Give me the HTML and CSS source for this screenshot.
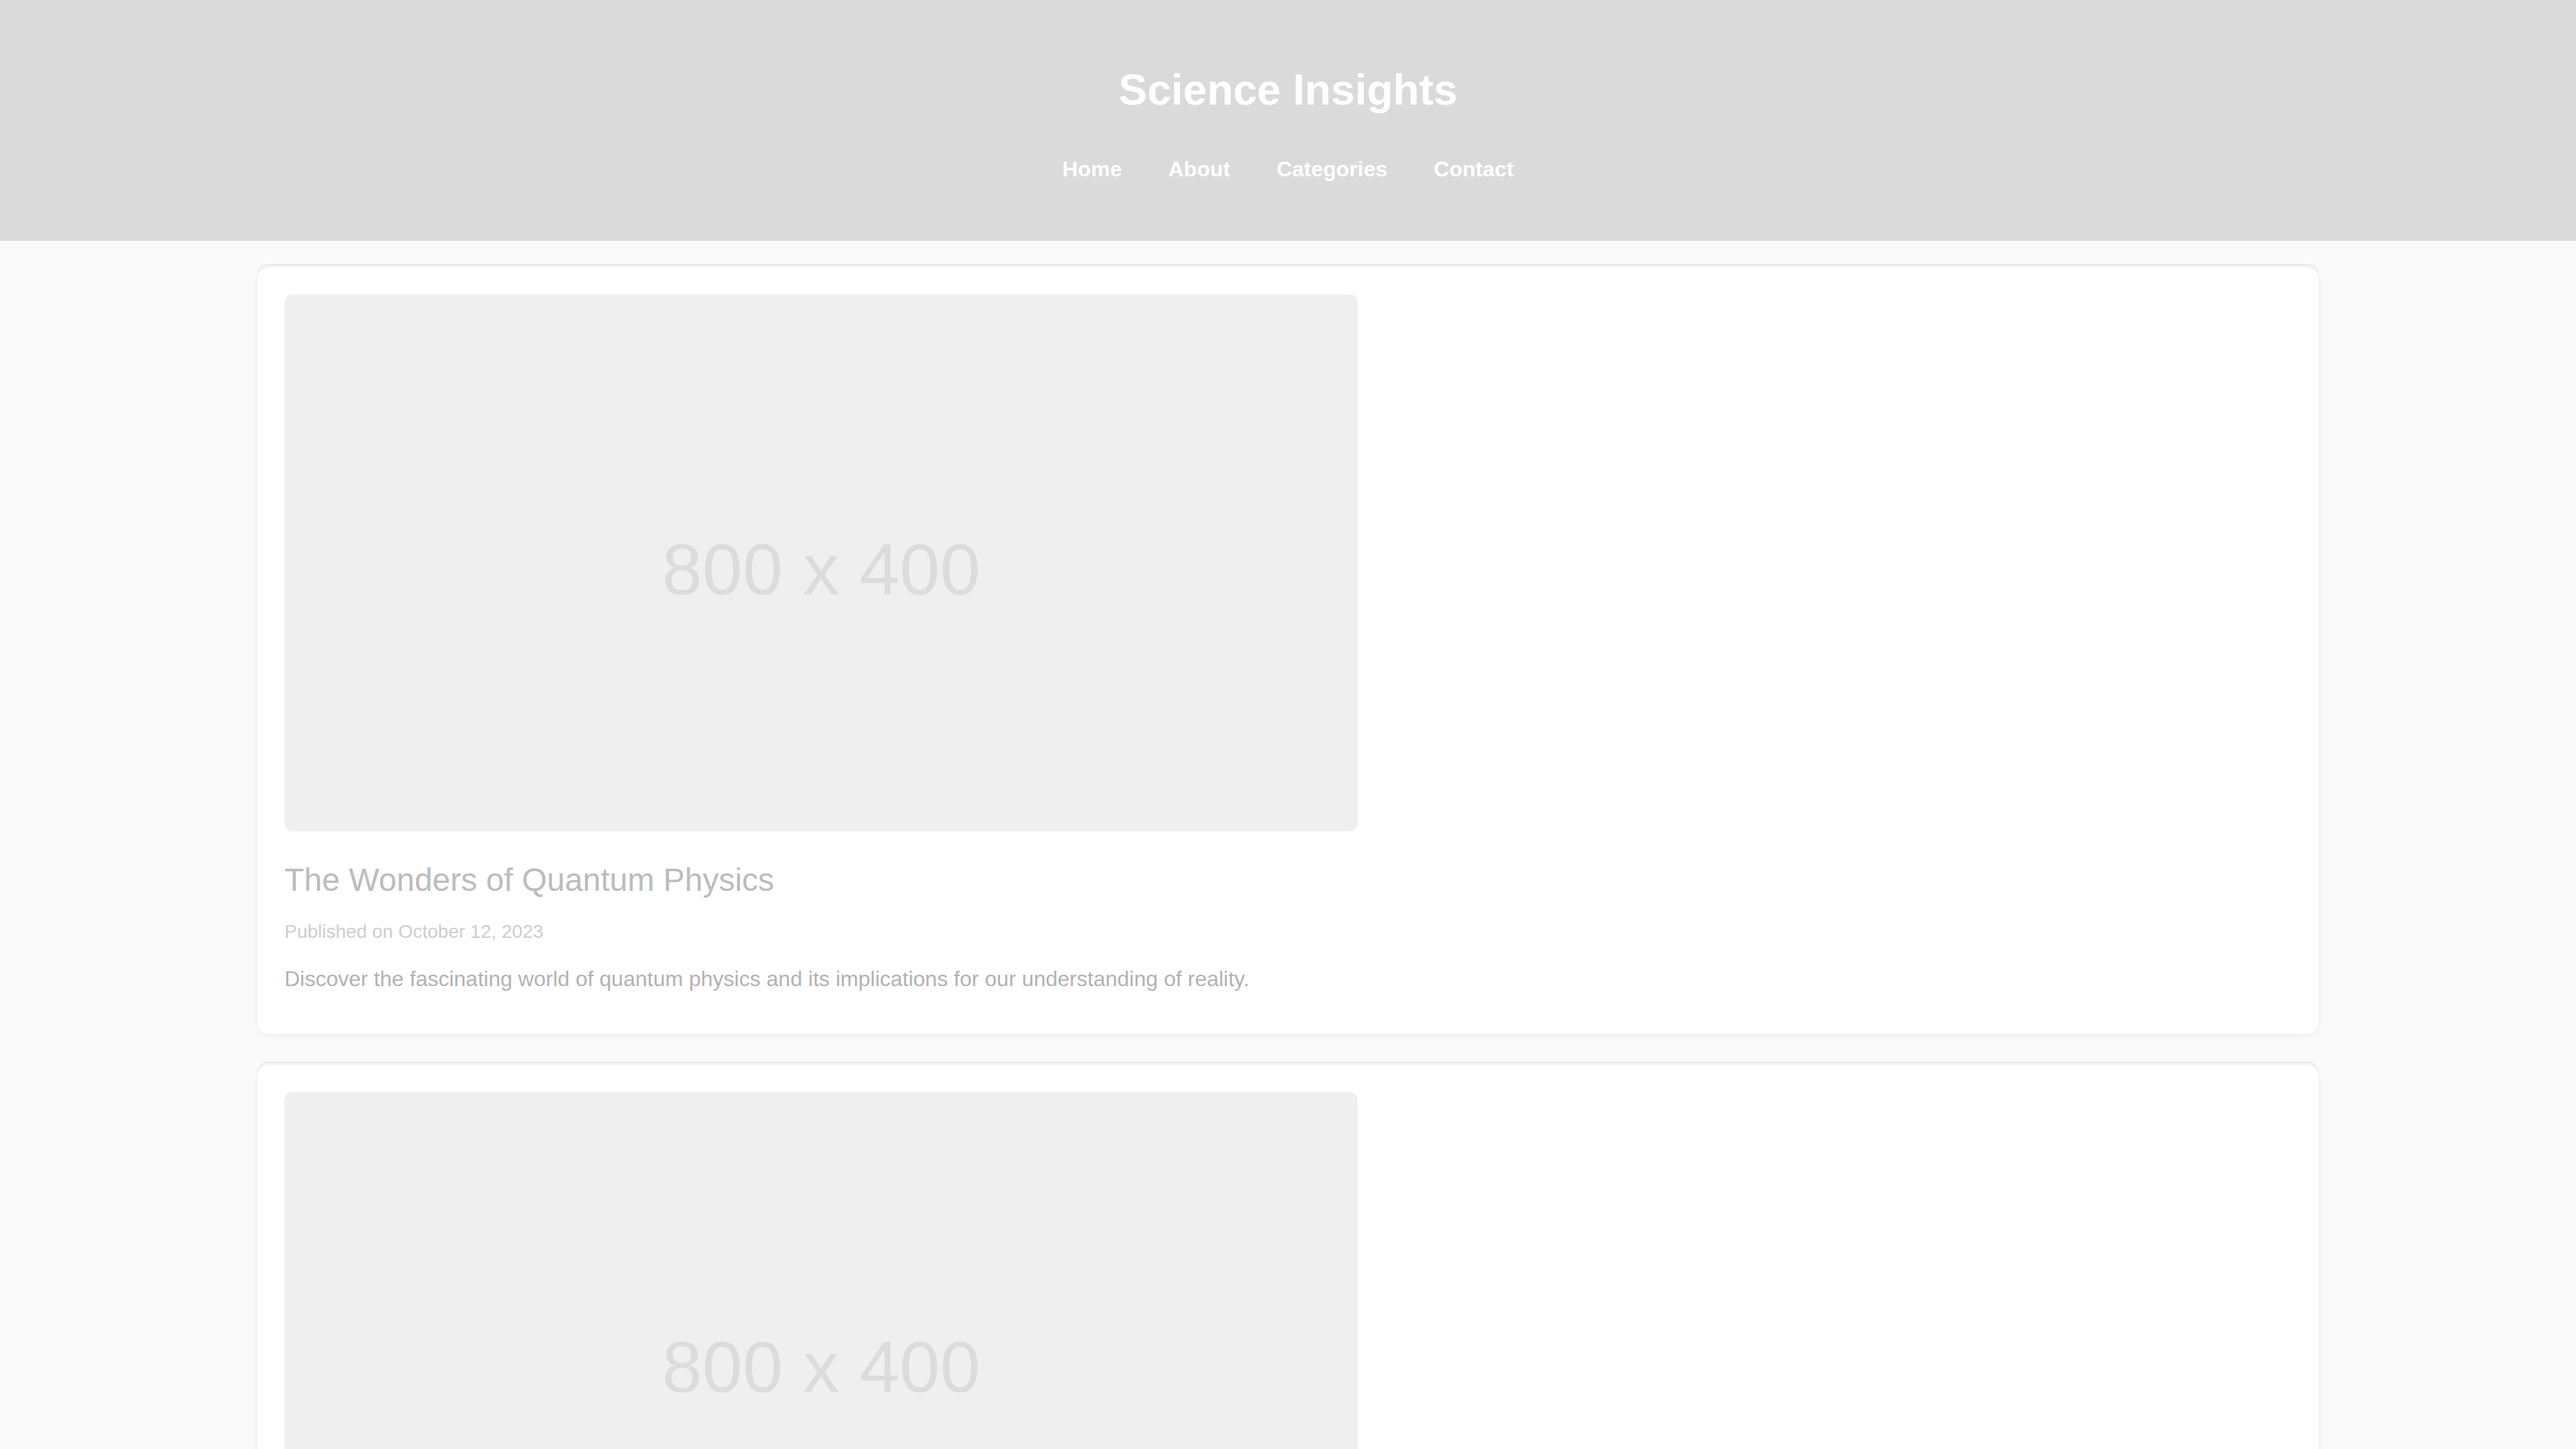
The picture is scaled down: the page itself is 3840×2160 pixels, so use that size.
FILE: index.html
```html
<!DOCTYPE html>
<html lang="en">
<head>
<meta charset="utf-8">
<title>Science Insights</title>
<link rel="stylesheet" href="styles.css">
</head>
<body>
<header class="site-header">
  <h1 class="site-title">Science Insights</h1>
  <nav class="site-nav">
    <ul class="nav-list">
      <li><a href="#">Home</a></li>
      <li><a href="#">About</a></li>
      <li><a href="#">Categories</a></li>
      <li><a href="#">Contact</a></li>
    </ul>
  </nav>
</header>
<main class="posts">
  <article class="post">
    <div class="post-image"><span>800 x 400</span></div>
    <h2 class="post-title">The Wonders of Quantum Physics</h2>
    <p class="post-date">Published on October 12, 2023</p>
    <p class="post-excerpt">Discover the fascinating world of quantum physics and its implications for our understanding of reality.</p>
  </article>
  <article class="post">
    <div class="post-image"><span>800 x 400</span></div>
  </article>
</main>
</body>
</html>
```

FILE: styles.css
```css
html {
  scrollbar-width: none;
}

body {
  margin: 0;
  background: #fafafa;
  font-family: "Liberation Sans", Arial, sans-serif;
}

.site-header {
  background: #dadada;
  padding: 97px 0 88px;
  text-align: center;
}

.site-title {
  margin: 0 0 63px;
  font-size: 64px;
  line-height: 74px;
  font-weight: bold;
  color: #ffffff;
}

.nav-list {
  list-style: none;
  margin: 0;
  padding: 0;
  display: flex;
  justify-content: center;
  gap: 69px;
}

.nav-list a {
  display: block;
  color: #ffffff;
  text-decoration: none;
  font-weight: bold;
  font-size: 32px;
  line-height: 37px;
}

.posts {
  width: 80%;
  margin: 0 auto;
  padding-top: 40px;
}

.post {
  background: #ffffff;
  border-radius: 16px;
  padding: 40px;
  margin-bottom: 47px;
  box-shadow: 0 -4px 0 0 #f4f4f4, 0 -5px 0 0 #dadada, 0 2px 12px rgba(0, 0, 0, 0.06);
}

.post-image {
  width: 1600px;
  height: 800px;
  box-sizing: border-box;
  padding-top: 20px;
  background: #efefef;
  border-radius: 12px;
  display: flex;
  align-items: center;
  justify-content: center;
  color: #dcdcdc;
  font-size: 108px;
  line-height: 124px;
}

.post-title {
  margin: 45px 0 0;
  font-size: 48px;
  line-height: 55px;
  font-weight: normal;
  color: #bcbcbc;
}

.post-date {
  margin: 34px 0 0;
  font-size: 28px;
  line-height: 32px;
  color: #cdcdcd;
}

.post-excerpt {
  margin: 36px 0 23px;
  font-size: 32px;
  line-height: 37px;
  color: #b2b2b2;
}
```
